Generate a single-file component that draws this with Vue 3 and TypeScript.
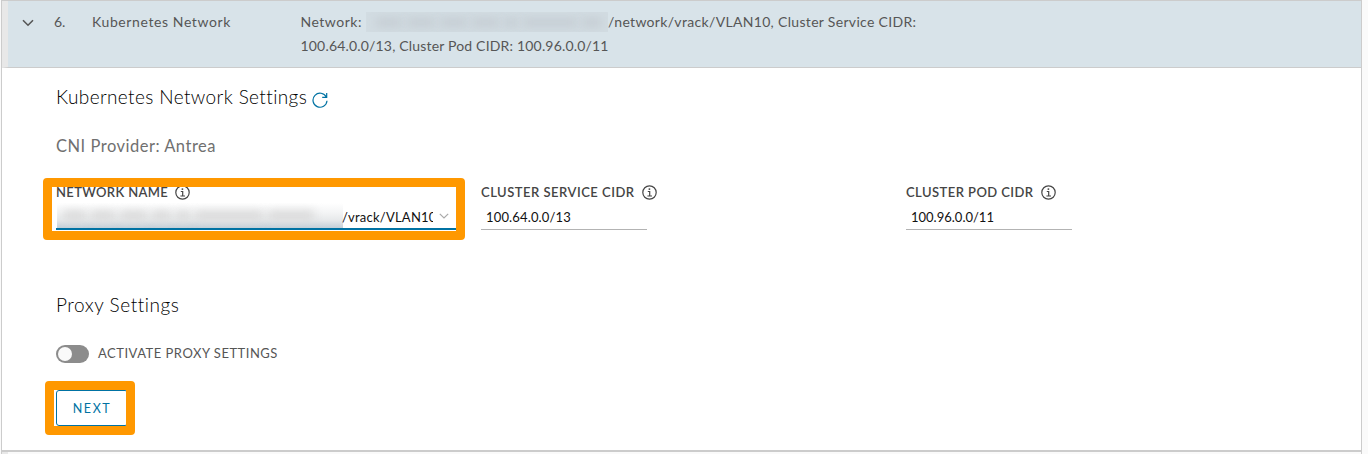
<script setup lang="ts">
interface CidrField {
  id: string
  label: string
  value: string
}

const cidrFields: CidrField[] = [
  { id: 'service', label: 'CLUSTER SERVICE CIDR', value: '100.64.0.0/13' },
  { id: 'pod', label: 'CLUSTER POD CIDR', value: '100.96.0.0/11' },
]

// Widths of the obscured word groups
const summarySmudges: number[] = [26, 28, 27, 27, 14, 54, 20]
const inputSmudges: number[] = [23, 24, 27, 19, 14, 68, 46]
</script>

<template>
  <div class="page">
    <section class="panel">
      <header class="head">
        <svg class="chevron" viewBox="0 0 12 8"><path d="M1 1.2 6 6.2 11 1.2" /></svg>
        <span class="num">6.</span>
        <span class="title">Kubernetes Network</span>
        <div class="summary">
          <div class="line">
            <span class="s-net">Network: /</span>
            <span class="redacted"><i v-for="(w, i) in summarySmudges" :key="i" :style="{ width: w + 'px' }"></i></span>
            <span class="s-path">/network/vrack/VLAN10, Cluster Service CIDR:</span>
          </div>
          <div class="line s-second">100.64.0.0/13, Cluster Pod CIDR: 100.96.0.0/11</div>
        </div>
      </header>

      <div class="body">
        <div class="heading">
          <h2 class="h-net">Kubernetes Network Settings</h2>
          <svg class="refresh" viewBox="0 0 16 16">
            <path d="M14.3 5.1A7 7 0 1 0 15 8.7M14.7 .9V5.4H10.2" />
          </svg>
        </div>
        <p class="cni">CNI Provider: Antrea</p>

        <div class="fields">
          <div class="field network">
            <div class="label">
              <span class="l-network">NETWORK NAME</span>
              <svg class="info" viewBox="0 0 15 15"><circle cx="7.5" cy="7.5" r="6.7" /><path d="M5.8 6.5H7.7V11M5.4 11H10" /><circle class="dot" cx="7.4" cy="4.1" r=".95" /></svg>
            </div>
            <div class="select">
              <span class="redacted-input"><i v-for="(w, i) in inputSmudges" :key="i" :style="{ width: w + 'px' }"></i></span>
              <span class="vlan">/vrack/VLAN10</span>
              <svg class="caret" viewBox="0 0 10 6"><path d="M.8 .8 5 5 9.2 .8" /></svg>
            </div>
            <div class="marker marker-field"></div>
          </div>
          <div v-for="f in cidrFields" :key="f.id" class="field">
            <div class="label">
              <span :class="'l-' + f.id">{{ f.label }}</span>
              <svg class="info" viewBox="0 0 15 15"><circle cx="7.5" cy="7.5" r="6.7" /><path d="M5.8 6.5H7.7V11M5.4 11H10" /><circle class="dot" cx="7.4" cy="4.1" r=".95" /></svg>
            </div>
            <div class="input"><span :class="'v-' + f.id">{{ f.value }}</span></div>
          </div>
        </div>

        <h2 class="h-proxy">Proxy Settings</h2>
        <div class="toggle-row">
          <span class="toggle"></span>
          <span class="toggle-text">ACTIVATE PROXY SETTINGS</span>
        </div>
        <div class="next-wrap">
          <button class="next" type="button">NEXT</button>
          <div class="marker marker-next"></div>
        </div>
      </div>
    </section>
    <div class="next-panel"></div>
  </div>
</template>

<style>
body {
  background: #fafafa;
  overflow: hidden;
}
</style>

<style scoped>
.page {
  box-sizing: border-box;
  width: 1361px;
  height: 454px;
  margin-left: 1px;
  border: 1px solid #ccc;
  border-bottom: 0;
  font-family: Lato, 'Liberation Sans', sans-serif;
  color: #565656;
  overflow: hidden;
}
.panel {
  height: 449px;
  background: #fff;
  border-bottom: 2px solid #ccc;
}
.next-panel {
  height: 2px;
  border-left: 6px solid #e8e8e8;
}
.head {
  box-sizing: border-box;
  display: flex;
  align-items: flex-start;
  height: 67px;
  padding: 9px 0 0 14px;
  background: #d8e3e9;
  border-left: 6px solid #e8e8e8;
  border-bottom: 1px solid #ccc;
  font-size: 14px;
  line-height: 24px;
  white-space: nowrap;
}
.chevron {
  width: 12px;
  height: 8px;
  margin-top: 9px;
}
.chevron path {
  fill: none;
  stroke: #565656;
  stroke-width: 1.6;
}
.num {
  width: 38px;
  margin-left: 20px;
}
.title {
  width: 208.5px;
  letter-spacing: 0.6px;
}
.line {
  display: flex;
  height: 24px;
}
.s-net {
  width: 65.5px;
  letter-spacing: 0.5px;
}
.redacted {
  position: relative;
  display: flex;
  align-items: center;
  gap: 5px;
  width: 242px;
  height: 20px;
  margin-top: 2px;
  box-sizing: border-box;
  padding-left: 10px;
  overflow: hidden;
  background: #d2dce2;
}
.redacted i {
  flex: none;
  height: 9px;
  background: #c5cdd3;
  filter: blur(5px);
}
.s-path {
  letter-spacing: 0.32px;
}
.s-second {
  letter-spacing: 0.18px;
}
.body {
  padding: 17px 0 0 54px;
}
.heading {
  display: flex;
  height: 24px;
}
h2 {
  margin: 0;
  font-size: 19px;
  font-weight: 300;
  line-height: 24px;
  color: #000;
  white-space: nowrap;
}
.h-net {
  width: 256px;
  letter-spacing: 0.38px;
}
.refresh {
  width: 16px;
  height: 16px;
  margin-top: 7px;
}
.refresh path {
  fill: none;
  stroke: #0072a3;
  stroke-width: 1.2;
}
.cni {
  margin: 25px 0 0;
  font-size: 16.5px;
  line-height: 24px;
  letter-spacing: 0.5px;
  color: #707070;
}
.fields {
  display: grid;
  grid-template-columns: 425px 425px 1fr;
  height: 48px;
  margin-top: 26px;
}
.field {
  position: relative;
}
.label {
  display: flex;
  align-items: center;
  gap: 7px;
  height: 18px;
  font-size: 13px;
  font-weight: 600;
  line-height: 16px;
  color: #454545;
  white-space: nowrap;
}
.label span {
  margin-top: -2px;
}
.l-network {
  letter-spacing: 0.35px;
}
.l-service {
  letter-spacing: 0.5px;
}
.l-pod {
  letter-spacing: 0.44px;
}
.info {
  width: 15px;
  height: 15px;
  margin-top: -1px;
}
.info circle,
.info path {
  fill: none;
  stroke: #454545;
  stroke-width: 1.2;
}
.info .dot {
  fill: #454545;
  stroke: none;
}
.input,
.select {
  box-sizing: border-box;
  display: flex;
  align-items: center;
  font-size: 13px;
  color: #111;
}
.input {
  width: 166px;
  height: 28px;
  padding: 3px 0 0 5px;
  border-bottom: 1px solid #b3b3b3;
}
.v-service {
  letter-spacing: 0.15px;
}
.select {
  width: 400px;
  height: 28px;
  border-bottom: 2px solid #0072a3;
}
.redacted-input {
  display: flex;
  align-items: center;
  gap: 5px;
  box-sizing: border-box;
  width: 286px;
  height: 25px;
  margin: 1px 0 0 1px;
  padding-left: 6px;
  overflow: hidden;
  background: linear-gradient(#fff, #f3f4f5 40%, #e6e8ea 70%, #c4cfd8);
}
.redacted-input i {
  flex: none;
  height: 9px;
  background: #d7d7d7;
  filter: blur(5px);
}
.vlan {
  width: 91px;
  margin: 4px 1px 0 -1px;
  overflow: hidden;
  letter-spacing: 0.22px;
}
.caret {
  width: 10px;
  height: 6px;
  margin: 2px 0 0 5px;
}
.caret path {
  fill: none;
  stroke: #aaa;
  stroke-width: 1.2;
}
.marker {
  position: absolute;
  box-sizing: border-box;
  border: 9px solid #ff9800;
  border-radius: 4px;
}
.marker-field {
  left: -13px;
  top: -6px;
  width: 422px;
  height: 62px;
}
.h-proxy {
  margin-top: 61px;
  letter-spacing: 0.55px;
}
.toggle-row {
  display: flex;
  align-items: center;
  height: 18px;
  margin-top: 28px;
}
.toggle {
  box-sizing: border-box;
  width: 33px;
  height: 18px;
  padding: 2px;
  border-radius: 9px;
  background: #8c8c8c;
}
.toggle::before {
  content: '';
  display: block;
  width: 14px;
  height: 14px;
  border-radius: 50%;
  background: #fafafa;
}
.toggle-text {
  margin: -2px 0 0 9px;
  font-size: 13px;
  letter-spacing: 0.5px;
}
.next-wrap {
  position: relative;
  width: 72px;
  height: 36px;
  margin-top: 27px;
}
.next {
  box-sizing: border-box;
  width: 72px;
  height: 36px;
  padding: 1px 0 0;
  border: 1px solid #0072a3;
  border-radius: 3px;
  background: #fff;
  color: #0072a3;
  font-family: inherit;
  font-size: 12.5px;
  letter-spacing: 1.6px;
}
.marker-next {
  left: -11px;
  top: -9px;
  width: 90px;
  height: 54px;
}
</style>
